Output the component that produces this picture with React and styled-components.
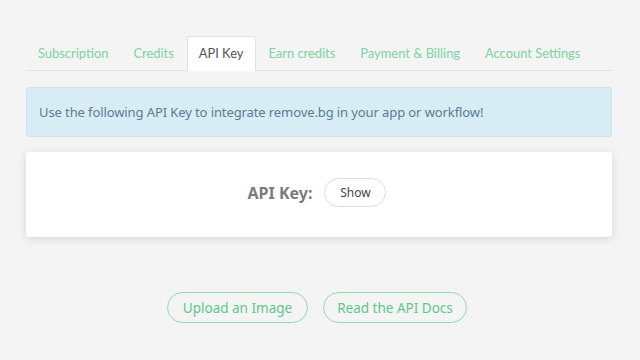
import styled, { createGlobalStyle } from 'styled-components';

const GlobalStyle = createGlobalStyle`
  html, body {
    margin: 0;
    padding: 0;
    background-color: #f4f4f4;
  }
  body {
    font-family: "Noto Sans", "DejaVu Sans", sans-serif;
  }
`;

const Page = styled.div`
  width: 640px;
  height: 360px;
  padding: 36px 28px 0 26px;
  box-sizing: border-box;
`;

const TabBar = styled.div`
  display: flex;
  border-bottom: 1px solid #e2e2e2;
  height: 34px;
`;

const Tab = styled.div`
  flex-shrink: 0;
  white-space: nowrap;
  padding: 0 12px 2px 11px;
  height: 35px;
  display: flex;
  align-items: center;
  font-family: "Lato", sans-serif;
  font-size: 12.9px;
  color: ${p => (p.$active ? '#555' : '#7dd3a2')};
  background: ${p => (p.$active ? '#fff' : 'transparent')};
  border: 1px solid ${p => (p.$active ? '#e2e2e2' : 'transparent')};
  border-bottom: none;
  border-radius: 3px 3px 0 0;
  margin-bottom: -1px;
  box-sizing: border-box;
`;

const Alert = styled.div`
  margin-top: 16px;
  height: 50px;
  box-sizing: border-box;
  padding: 0 12px;
  display: flex;
  align-items: center;
  background: #d8ecf6;
  border: 1px solid #c9e3ef;
  border-radius: 3px;
  color: #5a7d92;
  font-size: 13px;
  letter-spacing: -0.1px;
`;

const Card = styled.div`
  margin-top: 15px;
  height: 85px;
  background: #fff;
  border-radius: 3px;
  box-shadow: 0 2px 10px rgba(0, 0, 0, 0.12);
  display: flex;
  align-items: center;
  justify-content: center;
  gap: 12px;
  padding-right: 4px;
  padding-bottom: 4px;
  box-sizing: border-box;
`;

const KeyLabel = styled.span`
  font-size: 16px;
  font-weight: 700;
  color: #7b7b7b;
`;

const ShowButton = styled.button`
  width: 62px;
  height: 29px;
  border: 1px solid #ddd;
  border-radius: 15px;
  background: #fff;
  font-family: "Noto Sans", sans-serif;
  font-size: 12px;
  color: #444;
  padding: 0;
`;

const Actions = styled.div`
  margin-top: 55px;
  display: flex;
  justify-content: center;
  gap: 15px;
  padding-right: 4px;
`;

const OutlineButton = styled.button`
  height: 31px;
  width: ${p => p.$w}px;
  padding: 0;
  border: 1px solid #8fdcb0;
  border-radius: 16px;
  background: transparent;
  color: #5cc88c;
  font-family: "Noto Sans", sans-serif;
  font-size: 13.5px;
`;

const tabs = ['Subscription', 'Credits', 'API Key', 'Earn credits', 'Payment & Billing', 'Account Settings'];

export default function App() {
  return (
    <>
      <GlobalStyle />
      <Page>
        <TabBar>
          {tabs.map(t => (
            <Tab key={t} $active={t === 'API Key'}>{t}</Tab>
          ))}
        </TabBar>
        <Alert>Use the following API Key to integrate remove.bg in your app or workflow!</Alert>
        <Card>
          <KeyLabel>API Key:</KeyLabel>
          <ShowButton>Show</ShowButton>
        </Card>
        <Actions>
          <OutlineButton $w={141}>Upload an Image</OutlineButton>
          <OutlineButton $w={144}>Read the API Docs</OutlineButton>
        </Actions>
      </Page>
    </>
  );
}
